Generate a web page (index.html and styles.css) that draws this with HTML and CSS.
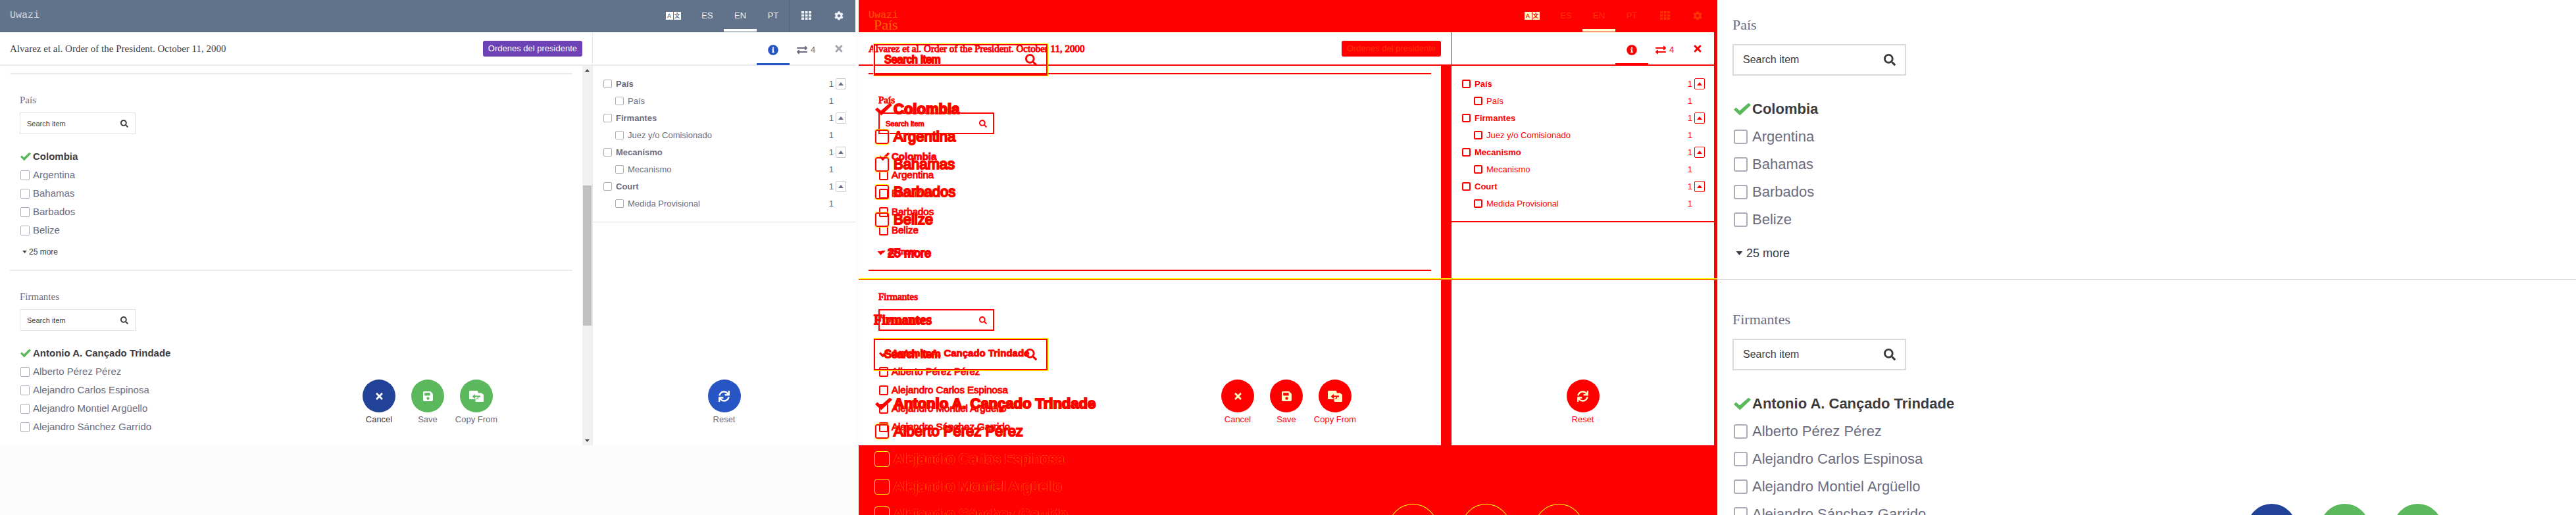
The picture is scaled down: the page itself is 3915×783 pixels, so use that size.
FILE: index.html
```html
<!DOCTYPE html>
<html lang="en">
<head>
<meta charset="utf-8">
<title>Uwazi</title>
<link rel="stylesheet" href="styles.css">
</head>
<body>
<svg class="sprite" aria-hidden="true">
  <symbol id="i-search" viewBox="0 0 512 512"><path d="M505 442.700L405.300 343c-4.500-4.500-10.600-7-17-7H372c27.600-35.300 44-79.700 44-128C416 93.100 322.900 0 208 0S0 93.100 0 208s93.100 208 208 208c48.300 0 92.700-16.400 128-44v16.300c0 6.400 2.500 12.500 7 17l99.700 99.700c9.400 9.400 24.600 9.400 33.900 0l28.300-28.300c9.400-9.400 9.400-24.600.1-34zM208 336c-70.700 0-128-57.200-128-128 0-70.700 57.200-128 128-128 70.700 0 128 57.200 128 128 0 70.700-57.200 128-128 128z"/></symbol>
  <symbol id="i-grid" viewBox="0 0 15 13"><path d="M0 0h4v3.500H0zM5.500 0h4v3.500h-4zM11 0h4v3.500h-4zM0 4.700h4v3.500H0zM5.500 4.700h4v3.500h-4zM11 4.700h4v3.500h-4zM0 9.400h4v3.500H0zM5.500 9.400h4v3.500h-4zM11 9.400h4v3.500h-4z"/></symbol>
  <symbol id="i-gear" viewBox="0 0 512 512"><path d="M487.400 315.700l-42.600-24.600c4.300-23.200 4.300-47 0-70.200l42.600-24.600c4.900-2.800 7.100-8.600 5.500-14-11.100-35.600-30-67.800-54.700-94.600-3.800-4.100-10-5.100-14.800-2.300L380.800 110c-17.900-15.400-38.500-27.300-60.800-35.100V25.800c0-5.600-3.900-10.500-9.400-11.700-36.700-8.200-74.300-7.800-109.200 0-5.500 1.200-9.400 6.100-9.400 11.700V75c-22.200 7.900-42.800 19.800-60.800 35.100L88.700 85.500c-4.900-2.800-11-1.900-14.800 2.300-24.700 26.700-43.600 58.900-54.700 94.600-1.700 5.400.6 11.200 5.500 14L67.300 221c-4.300 23.200-4.300 47 0 70.200l-42.600 24.600c-4.900 2.800-7.100 8.600-5.500 14 11.100 35.600 30 67.800 54.700 94.600 3.800 4.100 10 5.100 14.800 2.300l42.600-24.600c17.900 15.400 38.500 27.300 60.800 35.100v49.200c0 5.600 3.900 10.500 9.400 11.700 36.700 8.200 74.300 7.800 109.200 0 5.500-1.200 9.400-6.100 9.400-11.700v-49.200c22.200-7.900 42.800-19.800 60.800-35.100l42.600 24.600c4.900 2.800 11 1.900 14.800-2.300 24.700-26.700 43.600-58.900 54.700-94.600 1.500-5.500-.7-11.300-5.600-14.100zM256 336c-44.100 0-80-35.900-80-80s35.900-80 80-80 80 35.900 80 80-35.900 80-80 80z"/></symbol>
  <symbol id="i-info" viewBox="0 0 512 512"><path d="M256 8C119 8 8 119.100 8 256c0 137 111 248 248 248s248-111 248-248C504 119.100 393 8 256 8zm0 110c23.200 0 42 18.800 42 42s-18.800 42-42 42-42-18.800-42-42 18.800-42 42-42zm56 254c0 6.600-5.400 12-12 12h-88c-6.600 0-12-5.400-12-12v-24c0-6.600 5.400-12 12-12h12v-64h-12c-6.600 0-12-5.400-12-12v-24c0-6.600 5.400-12 12-12h64c6.600 0 12 5.400 12 12v100h12c6.600 0 12 5.400 12 12z"/></symbol>
  <symbol id="i-exchange" viewBox="0 0 512 512"><path d="M0 168v-16c0-13.300 10.700-24 24-24h360V80c0-21.400 25.900-32 41-17l80 80c9.400 9.400 9.400 24.600 0 34l-80 80c-15 15-41 4.400-41-17v-48H24c-13.300 0-24-10.700-24-24zm488 152H128v-48c0-21.300-25.900-32-41-17L7 335c-9.400 9.400-9.400 24.600 0 34l80 80c15 15 41 4.500 41-17v-48h360c13.300 0 24-10.700 24-24v-16c0-13.300-10.700-24-24-24z"/></symbol>
  <symbol id="i-times" viewBox="0 0 352 512"><path d="M242.700 256l100.100-100.100c12.300-12.300 12.300-32.200 0-44.500l-22.200-22.200c-12.300-12.300-32.200-12.300-44.500 0L176 189.300 75.900 89.200c-12.300-12.300-32.200-12.300-44.500 0L9.200 111.500c-12.300 12.300-12.300 32.200 0 44.500L109.300 256 9.200 356.100c-12.300 12.300-12.300 32.200 0 44.500l22.200 22.200c12.300 12.300 32.200 12.300 44.500 0L176 322.700l100.100 100.100c12.300 12.300 32.200 12.300 44.500 0l22.200-22.200c12.300-12.300 12.300-32.200 0-44.500L242.700 256z"/></symbol>
  <symbol id="i-save" viewBox="0 0 448 512"><path d="M433.900 129.900l-83.900-83.900A48 48 0 0 0 316.100 32H48C21.500 32 0 53.500 0 80v352c0 26.500 21.500 48 48 48h352c26.500 0 48-21.500 48-48V163.900a48 48 0 0 0-14.100-34zM224 416c-35.300 0-64-28.700-64-64s28.700-64 64-64 64 28.700 64 64-28.700 64-64 64zm96-304.500V212c0 6.600-5.400 12-12 12H76c-6.600 0-12-5.400-12-12V108c0-6.600 5.400-12 12-12h228.500c3.200 0 6.200 1.300 8.500 3.500l3.500 3.500c2.200 2.200 3.500 5.300 3.500 8.500z"/></symbol>
  <symbol id="i-copy" viewBox="0 0 22 17"><path d="M1.500 0H12q1.500 0 1.500 1.500V3.500h5L22 6v9.500q0 1.500-1.500 1.500H11q-1.500 0-1.500-1.500V13h-8Q0 13 0 11.500v-10Q0 0 1.500 0z"/><path class="cut" d="M4.500 8.700L9 5v2.600h8v2.200H14.300Q14.300 13 11 13h-1.500v-.900h1.500q2 0 2-2.300H9v2.600z"/></symbol>
  <symbol id="i-sync" viewBox="0 0 512 512"><path d="M440.700 12.600l4 82.800A247.200 247.200 0 0 0 255.800 8C134.700 8 33.900 94.900 12.300 209.800A12 12 0 0 0 24.100 224h49a12 12 0 0 0 11.700-9.300 175.900 175.900 0 0 1 317-56.900l-101.500-4.900a12 12 0 0 0-12.600 12v47.400a12 12 0 0 0 12 12H500a12 12 0 0 0 12-12V12a12 12 0 0 0-12-12h-47.400a12 12 0 0 0-11.900 12.600zM255.800 432a175.600 175.600 0 0 1-146-77.800l101.800 4.900a12 12 0 0 0 12.600-12v-47.400a12 12 0 0 0-12-12H12a12 12 0 0 0-12 12V500a12 12 0 0 0 12 12h47.400a12 12 0 0 0 12-12.600l-4.200-82.600A247.200 247.200 0 0 0 255.800 504c121.100 0 221.900-86.900 243.600-201.800a12 12 0 0 0-11.800-14.200h-49.100a12 12 0 0 0-11.700 9.300A175.900 175.900 0 0 1 255.800 432z"/></symbol>
  <symbol id="i-down" viewBox="0 0 10 6"><path d="M0 0h10L5 6z"/></symbol>
  <symbol id="i-up" viewBox="0 0 10 6"><path d="M0 6h10L5 0z"/></symbol>
</svg>

<main class="compare">
  <section class="pane before">
    <div class="app">
      <header class="topbar">
        <a class="brand" href="#">Uwazi</a>
        <nav class="menu">
          <button class="menu-item lang"><span>A</span><span>文</span></button>
          <a class="menu-item" href="#">ES</a>
          <a class="menu-item current" href="#">EN</a>
          <a class="menu-item" href="#">PT</a>
          <a class="menu-item divided" href="#" aria-label="Library"><svg class="ic-grid"><use href="#i-grid"/></svg></a>
          <a class="menu-item" href="#" aria-label="Settings"><svg class="ic-14"><use href="#i-gear"/></svg></a>
        </nav>
      </header>
      <div class="workspace">
        <div class="doc">
          <div class="doc-head"><h1>Alvarez et al. Order of the President. October 11, 2000</h1><span class="badge">Ordenes del presidente</span></div>
          <div class="doc-body">
            <div class="fields">
              <div class="group">
                <h2>País</h2>
                <label class="search"><input type="text" placeholder="Search item" aria-label="Search item"><svg><use href="#i-search"/></svg></label>
                <ul class="options">
                  <li><label><input type="checkbox" checked><span>Colombia</span></label></li>
                  <li><label><input type="checkbox"><span>Argentina</span></label></li>
                  <li><label><input type="checkbox"><span>Bahamas</span></label></li>
                  <li><label><input type="checkbox"><span>Barbados</span></label></li>
                  <li><label><input type="checkbox"><span>Belize</span></label></li>
                </ul>
                <button class="more"><svg><use href="#i-down"/></svg>25 more</button>
              </div>
              <div class="group">
                <h2>Firmantes</h2>
                <label class="search"><input type="text" placeholder="Search item" aria-label="Search item"><svg><use href="#i-search"/></svg></label>
                <ul class="options">
                  <li><label><input type="checkbox" checked><span>Antonio A. Cançado Trindade</span></label></li>
                  <li><label><input type="checkbox"><span>Alberto Pérez Pérez</span></label></li>
                  <li><label><input type="checkbox"><span>Alejandro Carlos Espinosa</span></label></li>
                  <li><label><input type="checkbox"><span>Alejandro Montiel Argüello</span></label></li>
                  <li><label><input type="checkbox"><span>Alejandro Sánchez Garrido</span></label></li>
                </ul>
              </div>
            </div>
            <div class="scrollbar"><svg><use href="#i-up"/></svg><div class="track"><div class="thumb"></div></div><svg><use href="#i-down"/></svg></div>
          </div>
        </div>
        <aside class="side">
          <div class="tabs">
            <button class="tab active" aria-label="Info"><svg class="ic-16"><use href="#i-info"/></svg></button>
            <button class="tab"><svg class="ic-16"><use href="#i-exchange"/></svg>4</button>
            <button class="tab close" aria-label="Close"><svg class="ic-16"><use href="#i-times"/></svg></button>
          </div>
          <ul class="tree">
            <li><label><input type="checkbox"><span>País</span></label><span class="count">1</span><button aria-label="Collapse"><svg><use href="#i-up"/></svg></button></li>
            <li class="child"><label><input type="checkbox"><span>País</span></label><span class="count">1</span></li>
            <li><label><input type="checkbox"><span>Firmantes</span></label><span class="count">1</span><button aria-label="Collapse"><svg><use href="#i-up"/></svg></button></li>
            <li class="child"><label><input type="checkbox"><span>Juez y/o Comisionado</span></label><span class="count">1</span></li>
            <li><label><input type="checkbox"><span>Mecanismo</span></label><span class="count">1</span><button aria-label="Collapse"><svg><use href="#i-up"/></svg></button></li>
            <li class="child"><label><input type="checkbox"><span>Mecanismo</span></label><span class="count">1</span></li>
            <li><label><input type="checkbox"><span>Court</span></label><span class="count">1</span><button aria-label="Collapse"><svg><use href="#i-up"/></svg></button></li>
            <li class="child"><label><input type="checkbox"><span>Medida Provisional</span></label><span class="count">1</span></li>
          </ul>
          <div class="actions"><button class="action blue"><i><svg class="ic-17"><use href="#i-sync"/></svg></i>Reset</button></div>
        </aside>
      </div>
      <div class="actions">
        <button class="action navy"><i><svg class="ic-15"><use href="#i-times"/></svg></i>Cancel</button>
        <button class="action"><i><svg class="ic-17"><use href="#i-save"/></svg></i>Save</button>
        <button class="action"><i><svg class="ic-copy"><use href="#i-copy"/></svg></i>Copy From</button>
      </div>
    </div>
  </section>

  <section class="pane diff">
    <div class="app">
      <header class="topbar">
        <a class="brand" href="#">Uwazi</a>
        <nav class="menu">
          <button class="menu-item lang"><span>A</span><span>文</span></button>
          <a class="menu-item" href="#">ES</a>
          <a class="menu-item current" href="#">EN</a>
          <a class="menu-item" href="#">PT</a>
          <a class="menu-item divided" href="#" aria-label="Library"><svg class="ic-grid"><use href="#i-grid"/></svg></a>
          <a class="menu-item" href="#" aria-label="Settings"><svg class="ic-14"><use href="#i-gear"/></svg></a>
        </nav>
      </header>
      <div class="workspace">
        <div class="doc">
          <div class="doc-head"><h1>Alvarez et al. Order of the President. October 11, 2000</h1><span class="badge">Ordenes del presidente</span></div>
          <div class="doc-body">
            <div class="fields">
              <div class="group">
                <h2>País</h2>
                <label class="search"><input type="text" placeholder="Search item" aria-label="Search item"><svg><use href="#i-search"/></svg></label>
                <ul class="options">
                  <li><label><input type="checkbox" checked><span>Colombia</span></label></li>
                  <li><label><input type="checkbox"><span>Argentina</span></label></li>
                  <li><label><input type="checkbox"><span>Bahamas</span></label></li>
                  <li><label><input type="checkbox"><span>Barbados</span></label></li>
                  <li><label><input type="checkbox"><span>Belize</span></label></li>
                </ul>
                <button class="more"><svg><use href="#i-down"/></svg>25 more</button>
              </div>
              <div class="group">
                <h2>Firmantes</h2>
                <label class="search"><input type="text" placeholder="Search item" aria-label="Search item"><svg><use href="#i-search"/></svg></label>
                <ul class="options">
                  <li><label><input type="checkbox" checked><span>Antonio A. Cançado Trindade</span></label></li>
                  <li><label><input type="checkbox"><span>Alberto Pérez Pérez</span></label></li>
                  <li><label><input type="checkbox"><span>Alejandro Carlos Espinosa</span></label></li>
                  <li><label><input type="checkbox"><span>Alejandro Montiel Argüello</span></label></li>
                  <li><label><input type="checkbox"><span>Alejandro Sánchez Garrido</span></label></li>
                </ul>
              </div>
            </div>
            <div class="scrollbar"></div>
          </div>
        </div>
        <aside class="side">
          <div class="tabs">
            <button class="tab active" aria-label="Info"><svg class="ic-16"><use href="#i-info"/></svg></button>
            <button class="tab"><svg class="ic-16"><use href="#i-exchange"/></svg>4</button>
            <button class="tab close" aria-label="Close"><svg class="ic-16"><use href="#i-times"/></svg></button>
          </div>
          <ul class="tree">
            <li><label><input type="checkbox"><span>País</span></label><span class="count">1</span><button aria-label="Collapse"><svg><use href="#i-up"/></svg></button></li>
            <li class="child"><label><input type="checkbox"><span>País</span></label><span class="count">1</span></li>
            <li><label><input type="checkbox"><span>Firmantes</span></label><span class="count">1</span><button aria-label="Collapse"><svg><use href="#i-up"/></svg></button></li>
            <li class="child"><label><input type="checkbox"><span>Juez y/o Comisionado</span></label><span class="count">1</span></li>
            <li><label><input type="checkbox"><span>Mecanismo</span></label><span class="count">1</span><button aria-label="Collapse"><svg><use href="#i-up"/></svg></button></li>
            <li class="child"><label><input type="checkbox"><span>Mecanismo</span></label><span class="count">1</span></li>
            <li><label><input type="checkbox"><span>Court</span></label><span class="count">1</span><button aria-label="Collapse"><svg><use href="#i-up"/></svg></button></li>
            <li class="child"><label><input type="checkbox"><span>Medida Provisional</span></label><span class="count">1</span></li>
          </ul>
          <div class="actions"><button class="action blue"><i><svg class="ic-17"><use href="#i-sync"/></svg></i>Reset</button></div>
        </aside>
      </div>
      <div class="actions">
        <button class="action navy"><i><svg class="ic-15"><use href="#i-times"/></svg></i>Cancel</button>
        <button class="action"><i><svg class="ic-17"><use href="#i-save"/></svg></i>Save</button>
        <button class="action"><i><svg class="ic-copy"><use href="#i-copy"/></svg></i>Copy From</button>
      </div>
    </div>
    <div class="detail">
      <div class="group">
        <h2>País</h2>
        <label class="search"><input type="text" placeholder="Search item" aria-label="Search item"><svg><use href="#i-search"/></svg></label>
        <ul class="options">
          <li><label><input type="checkbox" checked><span>Colombia</span></label></li>
          <li><label><input type="checkbox"><span>Argentina</span></label></li>
          <li><label><input type="checkbox"><span>Bahamas</span></label></li>
          <li><label><input type="checkbox"><span>Barbados</span></label></li>
          <li><label><input type="checkbox"><span>Belize</span></label></li>
        </ul>
        <button class="more"><svg><use href="#i-down"/></svg>25 more</button>
      </div>
      <div class="group">
        <h2>Firmantes</h2>
        <label class="search"><input type="text" placeholder="Search item" aria-label="Search item"><svg><use href="#i-search"/></svg></label>
        <ul class="options">
          <li><label><input type="checkbox" checked><span>Antonio A. Cançado Trindade</span></label></li>
          <li><label><input type="checkbox"><span>Alberto Pérez Pérez</span></label></li>
          <li><label><input type="checkbox"><span>Alejandro Carlos Espinosa</span></label></li>
          <li><label><input type="checkbox"><span>Alejandro Montiel Argüello</span></label></li>
          <li><label><input type="checkbox"><span>Alejandro Sánchez Garrido</span></label></li>
        </ul>
      </div>
      <div class="actions">
        <button class="action navy" aria-label="Cancel"><i></i></button>
        <button class="action" aria-label="Save"><i></i></button>
        <button class="action" aria-label="Copy From"><i></i></button>
      </div>
    </div>
  </section>

  <section class="pane after">
    <div class="detail">
      <div class="group">
        <h2>País</h2>
        <label class="search"><input type="text" placeholder="Search item" aria-label="Search item"><svg><use href="#i-search"/></svg></label>
        <ul class="options">
          <li><label><input type="checkbox" checked><span>Colombia</span></label></li>
          <li><label><input type="checkbox"><span>Argentina</span></label></li>
          <li><label><input type="checkbox"><span>Bahamas</span></label></li>
          <li><label><input type="checkbox"><span>Barbados</span></label></li>
          <li><label><input type="checkbox"><span>Belize</span></label></li>
        </ul>
        <button class="more"><svg><use href="#i-down"/></svg>25 more</button>
      </div>
      <div class="group">
        <h2>Firmantes</h2>
        <label class="search"><input type="text" placeholder="Search item" aria-label="Search item"><svg><use href="#i-search"/></svg></label>
        <ul class="options">
          <li><label><input type="checkbox" checked><span>Antonio A. Cançado Trindade</span></label></li>
          <li><label><input type="checkbox"><span>Alberto Pérez Pérez</span></label></li>
          <li><label><input type="checkbox"><span>Alejandro Carlos Espinosa</span></label></li>
          <li><label><input type="checkbox"><span>Alejandro Montiel Argüello</span></label></li>
          <li><label><input type="checkbox"><span>Alejandro Sánchez Garrido</span></label></li>
        </ul>
      </div>
      <div class="actions">
        <button class="action navy" aria-label="Cancel"><i></i></button>
        <button class="action" aria-label="Save"><i></i></button>
        <button class="action" aria-label="Copy From"><i></i></button>
      </div>
    </div>
  </section>
</main>
</body>
</html>
```
FILE: styles.css
```css
* { box-sizing: border-box; }
body { margin: 0; font-family: "Liberation Sans", Arial, sans-serif; background: #fff; }
h1, h2, ul { margin: 0; padding: 0; font-weight: 400; list-style: none; }
button { border: 0; padding: 0; background: none; font: inherit; color: inherit; }
a { color: inherit; text-decoration: none; }
svg { fill: currentColor; display: block; flex: none; }
.sprite { position: absolute; width: 0; height: 0; }
.ic-14 { width: 14px; height: 14px; }
.ic-15 { width: 15px; height: 15px; }
.ic-16 { width: 16px; height: 16px; }
.ic-17 { width: 17px; height: 17px; }
.ic-grid { width: 15px; height: 13px; }
.ic-copy { width: 22px; height: 17px; }

.compare {
  display: grid;
  grid-template-columns: repeat(3, minmax(0, 1fr));
  height: 100vh;
  overflow: hidden;
}
.pane {
  --bar: #60738a;
  --bar-ink: #eef1f5;
  --bar-rule: #566880;
  --rule: #ebebed;
  --text: #3c3c40;
  --muted: #6c6c80;
  --box: #adadb9;
  --field: #e2e2e5;
  --green: #5cb85c;
  --navy: #214296;
  --blue: #2755c3;
  --purple: #6d42b6;
  --soft: #a5a5af;
  --on-color: #fff;
  color: var(--muted);
  overflow: hidden;
}
.before { background: #fcfcfc; padding-right: 5px; }
.after { background: #fff; }

.app { position: relative; background: #fff; }
.topbar {
  display: flex;
  justify-content: space-between;
  height: 49px;
  padding-left: 15px;
  background: var(--bar);
  color: var(--bar-ink);
  border-bottom: 1px solid var(--bar-rule);
}
.brand { font: 15px/48px "Liberation Mono", monospace; color: #d3dae2; }
.menu { display: flex; font-size: 13px; }
.menu-item { display: flex; align-items: center; justify-content: center; width: 50px; border-bottom: 4px solid transparent; border-top: 3px solid transparent; }
.menu-item.current { border-bottom-color: var(--on-color); }
.menu-item.divided { box-shadow: -1px 0 var(--bar-rule); }
.lang { gap: 1px; width: 54px; }
.lang span { width: 11px; height: 12px; background: var(--on-color); color: var(--bar); font: bold 9px/12px "Liberation Sans", "Noto Sans CJK SC", sans-serif; text-align: center; }

.workspace { display: flex; }
.doc { flex: 1; min-width: 0; }
.doc-head {
  display: flex;
  align-items: center;
  justify-content: space-between;
  height: 51px;
  padding: 0 15px;
  border-bottom: 2px solid var(--rule);
}
.doc-head h1 { font: 15px/20px "Liberation Serif", serif; color: var(--text); }
.badge { padding: 0 8px; background: var(--purple); color: var(--on-color); border-radius: 3px; font-size: 13px; line-height: 24px; }
.doc-body { display: flex; }
.fields { flex: 1; padding: 11px 15px 14px; }
.group { border-top: 2px solid var(--rule); padding: 29px 15px 17px; }
.group + .group { padding-bottom: 0; }
.group h2 { font: 15px/20px "Liberation Serif", serif; margin-bottom: 9px; }
.search { display: flex; align-items: center; width: 176px; height: 33px; padding: 0 10px; border: 1px solid var(--field); color: var(--text); }
.search input { flex: 1; min-width: 0; border: 0; padding: 0; background: none; font: 11px/20px "Liberation Sans", sans-serif; outline: 0; }
.search input::placeholder { color: var(--text); opacity: 1; }
.search svg { width: 12px; height: 12px; }
.options { margin-top: 20px; font-size: 15px; line-height: 28px; }
.options label { display: grid; grid-template-columns: 19px 1fr; align-items: center; padding-left: 1px; }
.options input, .tree input { appearance: none; margin: 0; width: 14px; height: 15px; border: 1px solid var(--box); border-radius: 2px; background: none; }
.options input:checked { width: 16px; height: 13px; border: 0; border-radius: 0; background: var(--green); clip-path: polygon(0 54%, 13% 37%, 34% 62%, 86% 0, 100% 17%, 36% 100%); }
.options input:checked + span { color: var(--text); font-weight: 700; }
.more { display: flex; align-items: center; gap: 3px; margin-top: 9px; padding-left: 4px; font-size: 12px; line-height: 20px; color: var(--text); }
.more svg { width: 7px; height: 4px; }

.scrollbar { display: flex; flex-direction: column; align-items: center; width: 15px; padding: 5px 0; background: #f1f1f1; color: #454545; }
.scrollbar svg { width: 7px; height: 4px; }
.track { flex: 1; width: 13px; display: grid; grid-template-rows: 31% 38% 31%; }
.thumb { grid-row: 2; background: #c0c0c0; }

.side { position: relative; width: 400px; border-left: 1px solid var(--rule); }
.tabs { display: flex; justify-content: flex-end; height: 51px; border-bottom: 2px solid var(--rule); }
.tab { display: flex; align-items: center; justify-content: center; gap: 5px; width: 50px; padding-top: 4px; font-size: 13px; }
.tab.active { color: var(--blue); box-shadow: inset 0 -2px var(--blue), 0 1px var(--blue); }
.tab.close { color: var(--soft); padding-top: 0; }
.tree { padding: 14px 14px 15px 16px; border-bottom: 1px solid #dfdfe2; font-size: 13px; }
.tree li { display: flex; align-items: center; height: 26px; }
.tree label { display: flex; align-items: center; gap: 6px; flex: 1; font-weight: 700; }
.tree input { width: 13px; height: 13px; }
.tree .count { margin-right: 3px; }
.tree button { display: grid; place-items: center; width: 16px; height: 17px; border: 1px solid #c9c9d2; border-radius: 2px; }
.tree button svg { width: 8px; height: 5px; }
.tree .child { padding-left: 18px; }
.tree .child label { font-weight: 400; }
.tree .child .count { margin-right: 19px; }

/* Floating action buttons */
.actions { position: absolute; left: 0; right: 0; bottom: 29px; display: flex; justify-content: center; }
.action { display: flex; flex-direction: column; align-items: center; gap: 1px; width: 74px; font-size: 13px; line-height: 20px; --fill: var(--green); }
.action i { display: grid; place-items: center; width: 50px; height: 50px; border-radius: 50%; background: var(--fill); color: var(--on-color); }
.cut { fill: var(--green); }
.action.navy { --fill: var(--navy); color: var(--text); }
.action.blue { --fill: var(--blue); }

/* Magnified copy of the form */
.detail { position: relative; height: 100vh; overflow: hidden; --field: #dadade; --rule: #dcdcdf; }
.detail .group { padding: 45px 23px 24px; }
.detail .group:first-child { border-top: 0; padding-top: 23px; }
.detail .group h2 { font-size: 22px; line-height: 30px; margin-bottom: 14px; }
.detail .search { width: 264px; height: 48px; padding: 0 14px; border-width: 2px; }
.detail .search input { font-size: 16px; }
.detail .search svg { width: 18px; height: 18px; }
.detail .options { margin-top: 30px; font-size: 22px; line-height: 42px; }
.detail .options label { grid-template-columns: 28px 1fr; padding-left: 2px; }
.detail .options input { width: 21px; height: 22px; border-width: 2px; border-radius: 3px; }
.detail .options input:checked { width: 26px; height: 19px; border: 0; border-radius: 0; }
.detail .more { gap: 5px; margin-top: 15px; padding-left: 5px; font-size: 18px; line-height: 30px; }
.detail .more svg { width: 11px; height: 6px; }
.detail .actions { left: auto; right: 185px; bottom: -90px; }
.detail .action { width: 111px; height: 107px; }
.detail .action i { width: 75px; height: 75px; }

/* Difference view: changed pixels red, near matches yellow */
.diff {
  --bar: #f00; --bar-ink: #f30; --bar-rule: #f00; --rule: #f00; --text: #f00; --muted: #f00;
  --box: #f00; --field: #f00; --green: #f00; --navy: #f00; --blue: #f00; --purple: #f00;
  --soft: #f00; --on-color: #ffc;
  display: grid;
  grid-template-columns: minmax(0, 1fr);
  align-items: start;
  background: #f00;
}
.diff > .app, .diff > .detail { grid-area: 1 / 1; }
.diff > .app { margin-right: 5px; }
.diff > .detail { --field: #f00; --rule: #f00; }
.diff .brand { color: #f50; }
.diff .badge { color: #f30; }
.diff .scrollbar { background: #f00; }
.diff .tree { border-bottom: 2px solid #f00; padding-bottom: 14px; }
.diff .tree button { border-color: #f00; }
.diff .app .options input, .diff .tree input, .diff .app .search { border-width: 2px; }
.diff .app .search { padding: 0 9px; }
.diff .app .options input:checked { border-width: 0; }
.diff .fields, .diff h1 { -webkit-text-stroke: 1px #f00; }
.diff .detail {
  -webkit-text-stroke: 2px #f00;
  text-shadow: 1px 0 #ff0, -1px 0 #ff0, 0 1px #ff0, 0 -1px #ff0;
}
.diff .detail .search, .diff .detail input[type="checkbox"]:not(:checked) { outline: 1px solid #ff0; }
.diff .detail .search input { text-shadow: inherit; }
.diff .detail .group + .group { border-top-width: 1px; padding-top: 46px; box-shadow: 0 -1px #ff0, inset 0 1px #ff0; }
.diff .detail .group:first-child h2 { color: #f60; -webkit-text-stroke: 0; text-shadow: none; }
.diff .detail .action i { box-shadow: inset 0 0 0 1px #ff0; }
```
